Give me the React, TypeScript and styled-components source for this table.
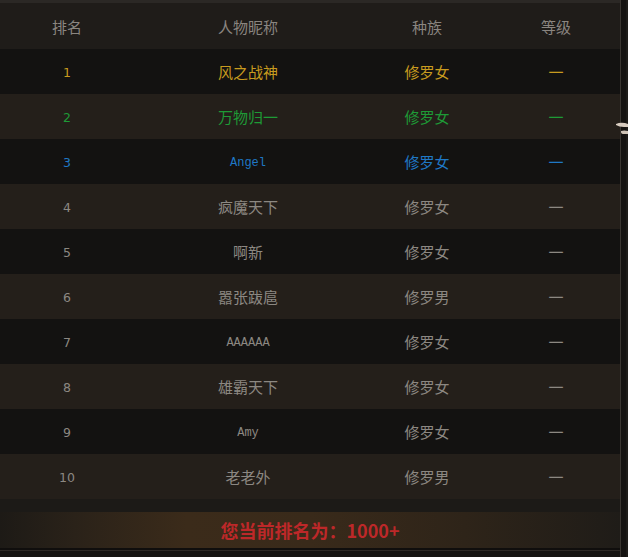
import React from "react";
import styled, { createGlobalStyle } from "styled-components";

const Global = createGlobalStyle`
  html, body { margin: 0; padding: 0; background: #141210; }
  body { width: 628px; height: 557px; overflow: hidden; }
`;

const Frame = styled.div`
  display: flex;
  width: 628px;
  height: 557px;
  background: #141210;
  position: relative;
`;

const Panel = styled.div`
  width: 620px;
  display: flex;
  flex-direction: column;
  background: #1d1a17;
`;

const TopStrip = styled.div`
  height: 3px;
  background: #2b2825;
`;

const Grid = styled.div`
  display: grid;
  grid-template-columns: 134px 228px 130px 128px;
  align-items: center;
  justify-items: center;
`;

const HeaderRow = styled(Grid)`
  height: 46px;
  background: #1f1c19;
  color: #8a8580;
  font-family: "Noto Sans CJK SC", sans-serif;
  font-size: 15px;
`;

const Row = styled(Grid)<{ $odd: boolean; $color: string }>`
  height: 45px;
  background: ${(p) => (p.$odd ? "#131211" : "#241f1a")};
  color: ${(p) => p.$color};
`;

const RankCell = styled.span`
  font-family: "DejaVu Sans", sans-serif;
  font-size: 12.5px;
  padding-top: 1px;
`;

const NameCell = styled.span<{ $latin: boolean }>`
  font-family: ${(p) =>
    p.$latin ? '"Liberation Mono", monospace' : '"Noto Sans CJK SC", sans-serif'};
  font-size: ${(p) => (p.$latin ? "12px" : "15px")};
  padding-top: ${(p) => (p.$latin ? "3px" : "0")};
`;

const CjkCell = styled.span`
  font-family: "Noto Sans CJK SC", sans-serif;
  font-size: 15px;
`;

const Gap = styled.div`
  height: 13px;
  background: #1c1a17;
`;

const Footer = styled.div`
  height: 36px;
  display: flex;
  align-items: center;
  justify-content: center;
  background: linear-gradient(
    90deg,
    #1d1a16 0%,
    #2a2219 12%,
    #3b2b1a 30%,
    #392a1a 50%,
    #2e2419 75%,
    #1f1c18 100%
  );
  color: #bd2829;
  font-family: "Noto Sans CJK SC", sans-serif;
  font-weight: 700;
  font-size: 18px;
`;

const BottomStrip = styled.div`
  flex: 1;
  border-top: 2px solid #100e0d;
  box-shadow: inset 0 1px 0 #2e2a26;
  background: #161412;
`;

const RightRail = styled.div`
  width: 8px;
  border-left: 1px solid #3a3631;
  background: #151311;
  box-shadow: inset -2px 0 0 #1d1b18;
`;

const Pointer = styled.svg`
  position: absolute;
  left: 616px;
  top: 121px;
`;

type Entry = { rank: number; name: string; race: string; color: string };

const GOLD = "#c89b1f";
const GREEN = "#1e9a36";
const BLUE = "#1f78c6";
const GRAY = "#8c8882";

const entries: Entry[] = [
  { rank: 1, name: "风之战神", race: "修罗女", color: GOLD },
  { rank: 2, name: "万物归一", race: "修罗女", color: GREEN },
  { rank: 3, name: "Angel", race: "修罗女", color: BLUE },
  { rank: 4, name: "疯魔天下", race: "修罗女", color: GRAY },
  { rank: 5, name: "啊新", race: "修罗女", color: GRAY },
  { rank: 6, name: "嚣张跋扈", race: "修罗男", color: GRAY },
  { rank: 7, name: "AAAAAA", race: "修罗女", color: GRAY },
  { rank: 8, name: "雄霸天下", race: "修罗女", color: GRAY },
  { rank: 9, name: "Amy", race: "修罗女", color: GRAY },
  { rank: 10, name: "老老外", race: "修罗男", color: GRAY },
];

export default function App() {
  return (
    <>
      <Global />
      <Frame>
        <Panel>
          <TopStrip />
          <HeaderRow>
            <span>排名</span>
            <span>人物昵称</span>
            <span>种族</span>
            <span>等级</span>
          </HeaderRow>
          {entries.map((e) => (
            <Row key={e.rank} $odd={e.rank % 2 === 1} $color={e.color}>
              <RankCell>{e.rank}</RankCell>
              <NameCell $latin={/^[A-Za-z]+$/.test(e.name)}>{e.name}</NameCell>
              <CjkCell>{e.race}</CjkCell>
              <CjkCell>一</CjkCell>
            </Row>
          ))}
          <Gap />
          <Footer>您当前排名为：1000+</Footer>
          <BottomStrip />
        </Panel>
        <RightRail />
        <Pointer width="12" height="16" viewBox="0 0 12 16">
          <path d="M0 3 Q4 1 9 2 L12 3 L12 6 L8 6 Q3 6 0 4 Z" fill="#d8ccc0" />
          <path d="M5 10 Q8 9 12 10 L12 13 L8 13 Q5 13 5 11 Z" fill="#cfc3b6" />
        </Pointer>
      </Frame>
    </>
  );
}
